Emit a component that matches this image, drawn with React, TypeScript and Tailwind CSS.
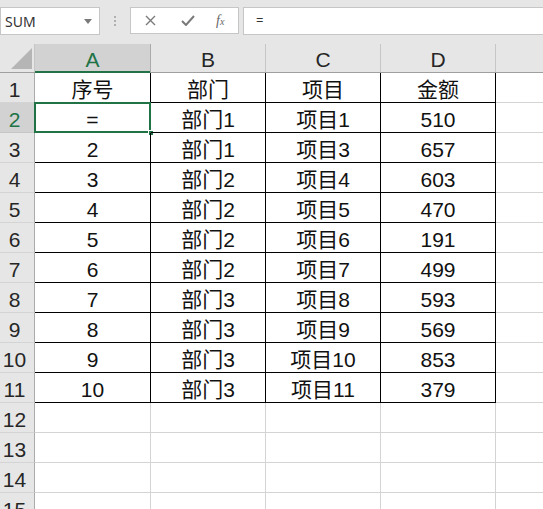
import React from "react";

const rows: string[][] = [
  ["序号", "部门", "项目", "金额"],
  ["=", "部门1", "项目1", "510"],
  ["2", "部门1", "项目3", "657"],
  ["3", "部门2", "项目4", "603"],
  ["4", "部门2", "项目5", "470"],
  ["5", "部门2", "项目6", "191"],
  ["6", "部门2", "项目7", "499"],
  ["7", "部门3", "项目8", "593"],
  ["8", "部门3", "项目9", "569"],
  ["9", "部门3", "项目10", "853"],
  ["10", "部门3", "项目11", "379"],
];

const colWidths = ["w-[116px]", "w-[115px]", "w-[115px]", "w-[115px]"];
const letters = ["A", "B", "C", "D"];
const font = { fontFamily: '"Liberation Sans", "Noto Sans CJK SC", sans-serif' };

const Toolbar = () => (
  <div className="flex h-[44px] items-start bg-[#e6e6e6] pt-[7px]">
    <div className="flex h-[28px] w-[100px] items-center justify-between border border-[#c6c6c6] bg-white pl-[4px] pr-[7px] text-[14px] text-[#333]" style={{ fontFamily: '"Noto Sans", sans-serif' }}>
      <span>SUM</span>
      <svg width="8" height="5" viewBox="0 0 8 5"><path d="M0 0h8L4 5z" fill="#7a7a7a" /></svg>
    </div>
    <div className="flex h-[28px] w-[30px] flex-col items-center justify-center gap-[2px]">
      <span className="h-[2px] w-[2px] bg-[#b0b0b0]" />
      <span className="h-[2px] w-[2px] bg-[#b0b0b0]" />
      <span className="h-[2px] w-[2px] bg-[#b0b0b0]" />
    </div>
    <div className="flex h-[27px] w-[109px] items-center border border-[#c6c6c6] bg-white">
      <svg className="ml-[14px]" width="11" height="11" viewBox="0 0 11 11"><path d="M1 1l9 9M10 1l-9 9" stroke="#7a7a7a" strokeWidth="1.4" /></svg>
      <svg className="ml-[25px]" width="14" height="11" viewBox="0 0 14 11"><path d="M1 6l4 4L13 1" stroke="#7a7a7a" strokeWidth="2" fill="none" /></svg>
      <span className="ml-[21px] text-[14px] italic text-[#666]" style={{ fontFamily: '"Liberation Serif", serif' }}>f<span className="text-[10px]">x</span></span>
    </div>
    <div className="ml-[4px] flex h-[28px] flex-1 items-center border border-r-0 border-[#c6c6c6] bg-white pl-[12px] text-[13px] text-[#333]" style={{ fontFamily: '"Noto Sans", sans-serif' }}>
      =
    </div>
  </div>
);

const HeaderRow = () => (
  <div className="flex h-[29px] border-b border-[#9f9f9f] bg-[#e6e6e6]">
    <div className="flex w-[35px] items-end justify-end border-r border-[#c6c6c6] pb-[3px] pr-[2px]">
      <svg width="21" height="21" viewBox="0 0 21 21"><path d="M21 0V21H0z" fill="#b5b5b5" /></svg>
    </div>
    {letters.map((l, i) => (
      <div
        key={l}
        className={`${colWidths[i]} flex items-center justify-center border-r pt-[2px] text-[21px] leading-none ${i === 0 ? "relative border-[#ababab] bg-[#d2d2d2] text-[#217346]" : "border-[#c6c6c6] text-[#262626]"}`}
        style={font}
      >
        {l}
        {i === 0 && <span className="absolute bottom-[-1px] left-0 right-0 h-[2px] bg-[#217346]" />}
      </div>
    ))}
    <div className="flex-1" />
  </div>
);

const RowHeader = ({ n, active }: { n: number; active?: boolean }) => (
  <div
    className={`flex w-[35px] shrink-0 items-center justify-center border-r border-b pr-[5px] pt-[5px] text-[21px] ${active ? "bg-[#d2d2d2] text-[#217346] border-r-[#217346] border-b-[#c6c6c6]" : "bg-[#e6e6e6] text-[#262626] border-r-[#ababab] border-b-[#d4d4d4]"}`}
    style={font}
  >
    {n}
  </div>
);

export default function App() {
  return (
    <div className="h-[509px] w-[543px] overflow-hidden bg-white">
      <Toolbar />
      <HeaderRow />
      {rows.map((r, ri) => (
        <div key={ri} className="flex h-[30px]">
          <RowHeader n={ri + 1} active={ri === 1} />
          {r.map((v, ci) => (
            <div
              key={ci}
              className={`${colWidths[ci]} relative flex shrink-0 items-center justify-center border-r border-b border-black pt-[5px] text-[21px] text-[#111]`}
              style={font}
            >
              {v}
              {ri === 1 && ci === 0 && (
                <>
                  <span className="absolute -left-[1px] -top-[1px] bottom-[-1px] right-[-1px] border-2 border-[#217346]" />
                  <span className="absolute bottom-[-4px] right-[-4px] h-[6px] w-[6px] border border-white bg-[#217346]" />
                </>
              )}
            </div>
          ))}
          <div className="flex-1 border-b border-[#d4d4d4]" />
        </div>
      ))}
      {[12, 13, 14, 15].map((n) => (
        <div key={n} className="flex h-[30px]">
          <RowHeader n={n} />
          {colWidths.map((w, ci) => (
            <div key={ci} className={`${w} shrink-0 border-r border-b border-[#d4d4d4]`} />
          ))}
          <div className="flex-1 border-b border-[#d4d4d4]" />
        </div>
      ))}
    </div>
  );
}
